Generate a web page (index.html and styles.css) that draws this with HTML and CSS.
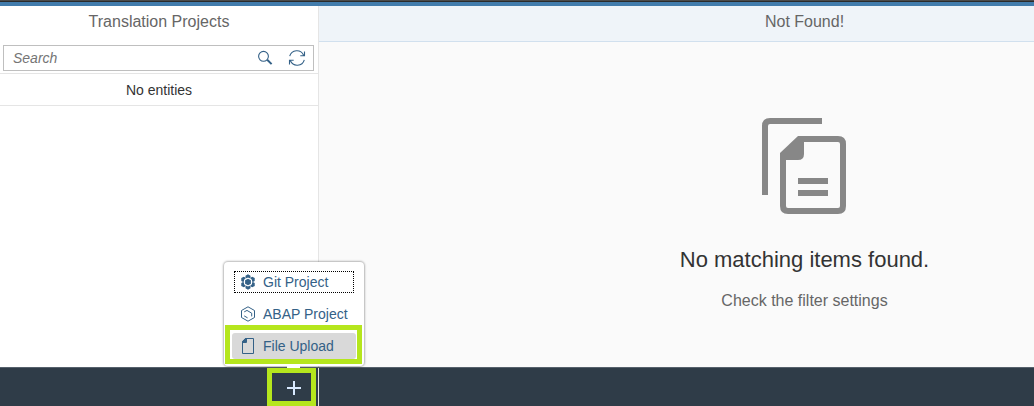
FILE: index.html
```html
<!DOCTYPE html>
<html lang="en">
<head>
<meta charset="utf-8">
<title>Translation Projects</title>
<link rel="stylesheet" href="styles.css">
</head>
<body>
<div class="app">
  <div class="shell-bar"></div>
  <div class="columns">
    <aside class="master">
      <h1 class="title">Translation Projects</h1>
      <div class="search">
        <span class="placeholder">Search</span>
        <svg class="icon-search" width="16" height="16" viewBox="0 0 16 16"><circle cx="6.500" cy="6.300" r="4.900"/><path class="handle" d="M10.2 9.8 14.6 14.1"/></svg>
        <svg class="icon-sync" width="18" height="18" viewBox="0 0 18 18"><path d="M1.7 7.2A7.4 7.4 0 0 1 15.6 6.2M16.5 2.500v4.200h-4.200M16.3 10.8A7.4 7.4 0 0 1 2.4 11.8M1.500 15.500v-4.200h4.200"/></svg>
      </div>
      <div class="empty-row">No entities</div>
    </aside>
    <main class="detail">
      <header class="title detail-title">Not Found!</header>
      <section class="message">
        <svg class="documents" width="87" height="98" viewBox="0 0 87 98">
          <path class="thick" d="M4 78V9Q4 4 9 4H61"/>
          <path class="thick" d="M39 22H77Q82 22 82 27V89Q82 94 77 94H27Q22 94 22 89V39Z"/>
          <path class="fold" d="M19 36 37 19H43V37Q43 43 37 43H19Z"/>
          <path class="thick" d="M37 64H67M37 76H67"/>
        </svg>
        <h2>No matching items found.</h2>
        <p>Check the filter settings</p>
      </section>
    </main>
  </div>
  <footer class="footer"><div class="footer-left"></div></footer>
</div>
<div class="popover">
  <div class="item focused">
    <svg width="16" height="16" viewBox="0 0 16 16"><g class="solid"><path d="M8 4.700 10.900 6.350v3.300L8 11.300 5.100 9.650V6.350Z"/><path id="lobe" d="M5.500 1.700 8 .2 10.500 1.700V3.700L9.500 4.200 8 3.400 6.500 4.200 5.500 3.700Z"/><use href="#lobe" transform="rotate(60 8 8)"/><use href="#lobe" transform="rotate(120 8 8)"/><use href="#lobe" transform="rotate(180 8 8)"/><use href="#lobe" transform="rotate(240 8 8)"/><use href="#lobe" transform="rotate(300 8 8)"/></g></svg>
    <span>Git Project</span>
  </div>
  <div class="item">
    <svg width="16" height="16" viewBox="0 0 16 16"><path d="M8 .8 14.500 4.500v7L8 15.200 1.500 11.500v-7ZM4.200 5.900 7 4.400 11.700 7.200V10.400M4.200 9.900 7.600 11.900"/></svg>
    <span>ABAP Project</span>
  </div>
  <div class="item hovered">
    <svg width="16" height="16" viewBox="0 0 16 16"><path d="M5.500.5h8v15h-11v-12Z"/><path class="solid" d="M2 5V3.500L5.500 0H7V4Q7 5 6 5Z"/></svg>
    <span>File Upload</span>
  </div>
  <div class="arrow"></div>
</div>
<div class="marker marker-item"></div>
<div class="marker marker-add">
  <svg width="16" height="16" viewBox="0 0 16 16"><path d="M8 1v14M1 8h14"/></svg>
</div>
</body>
</html>
```
FILE: styles.css
```css
* { box-sizing: border-box; }
body { margin: 0; font-family: "Liberation Sans", Arial, sans-serif; overflow: hidden; }
svg { display: block; flex: none; fill: none; stroke: #346187; stroke-width: 1; }
.app { width: 1034px; height: 406px; display: flex; flex-direction: column; }
.shell-bar { height: 6px; flex: none; background: linear-gradient(#4a4a4a 0 1px, #2b2b2b 1px 2px, #427cac 2px); }
.columns { flex: 1; display: flex; min-height: 0; }
.master { width: 319px; flex: none; background: #fff; border-right: 1px solid #e5e5e5; }
.title { margin: 0; height: 36px; line-height: 31px; text-align: center; font-size: 16px; font-weight: 400; color: #666; }
.search { margin: 3px 4px 2px 3px; height: 26px; border: 1px solid #bfbfbf; display: flex; align-items: center; padding: 0 7px 0 9px; }
.placeholder { flex: 1; font-size: 14px; font-style: italic; color: #757575; }
.icon-search { margin-right: 15px; }
.icon-search circle { stroke-width: 1.1; }
.icon-search .handle { stroke-width: 2; }
.icon-sync { stroke-width: 1.1; }
.empty-row { height: 33px; border: solid #e5e5e5; border-width: 1px 0; line-height: 32px; text-align: center; font-size: 14px; color: #333; }
.detail { flex: 1; background: #fafafa; }
.detail-title { padding-left: 256px; background: #eff4f9; border-bottom: 1px solid #d1e0ee; }
.message { display: flex; flex-direction: column; align-items: center; padding: 75px 0 0 256px; }
.documents { stroke: #878787; }
.documents .thick { stroke-width: 6; }
.documents .fold { fill: #878787; stroke: none; }
.message h2 { margin: 32px 0 0; font-size: 22px; line-height: 26px; font-weight: 400; color: #333; white-space: nowrap; }
.message p { margin: 18px 0 0; font-size: 16px; line-height: 20px; color: #666; }
.footer { height: 39px; flex: none; background: #2f3c48; border-top: 1px solid #56616c; }
.footer-left { width: 319px; height: 38px; border-right: 1px solid #e5e5e5; }
.popover { position: absolute; left: 224px; top: 262px; width: 140px; height: 104px; padding: 4px 8px; background: #fff; border-radius: 4px; box-shadow: 0 0 2px 1px rgba(0,0,0,.28); }
.item { height: 26px; margin: 3px 0 6px; padding-left: 8px; display: flex; align-items: center; gap: 7px; border-radius: 3px; font-size: 14px; color: #346187; white-space: nowrap; }
.focused { position: relative; }
.focused::after { content: ""; position: absolute; inset: 2px; border: 1px dotted #000; }
.hovered { background: #d9d9d9; }
.solid { fill: #346187; stroke: none; }
.arrow { position: absolute; left: 63px; top: 104px; width: 13px; height: 2px; background: #fff; }
.marker { position: absolute; border: 5px solid #b5e61d; }
.marker-item { left: 225px; top: 325px; width: 137px; height: 39px; }
.marker-add { left: 267px; top: 368px; width: 49px; height: 38px; display: flex; align-items: center; justify-content: center; padding: 2px 0 0 5px; }
.marker-add svg { stroke: #d8e9ff; stroke-width: 2; }
```
